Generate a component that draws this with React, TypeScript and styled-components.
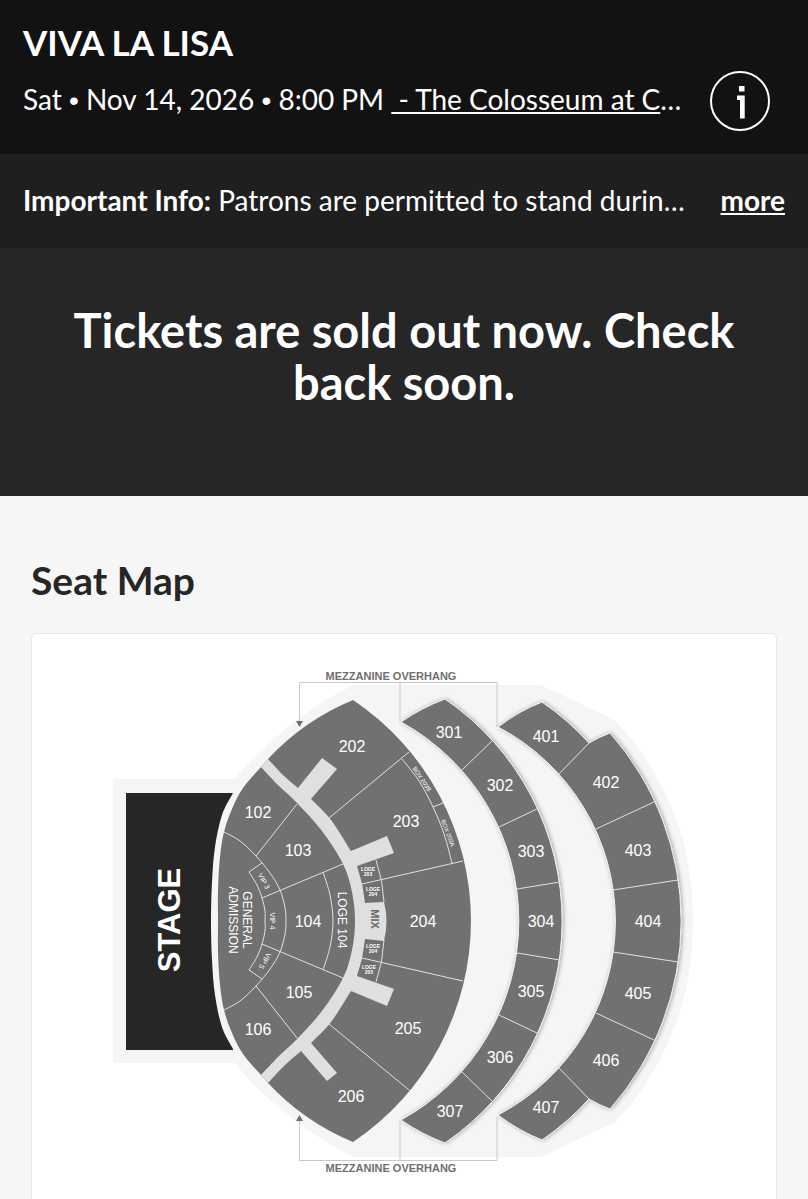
import React from "react";
import styled, { createGlobalStyle } from "styled-components";

const GlobalStyle = createGlobalStyle`
  * { box-sizing: border-box; }
  html, body { margin: 0; padding: 0; }
  body {
    background: #f6f6f6;
    color: #262626;
    font-family: Lato, "Liberation Sans", sans-serif;
    font-variant-ligatures: none;
  }
  h1, h2, p { margin: 0; }
`;

const Page = styled.div`
  display: flex;
  flex-direction: column;
  min-height: 100vh;
`;

const EventHeader = styled.header`
  background: #121212;
  color: #fff;
  padding: 22px 38px 23px 23px;
`;

const EventTitle = styled.h1`
  font-size: 35px;
  line-height: 40px;
  font-weight: 700;
`;

const EventRow = styled.div`
  display: flex;
  align-items: center;
  gap: 16px;
  margin-top: 9px;
`;

const Truncated = styled.p`
  flex: 1;
  min-width: 0;
  overflow: hidden;
  white-space: pre;
  padding-bottom: 2px;
  font-size: 28px;
  line-height: 38px;
`;

const Bullet = styled.span`
  font-family: "Liberation Sans", Arial, sans-serif;
`;

const VenueLink = styled.a`
  color: inherit;
  text-decoration: underline;
  text-decoration-thickness: 2px;
  text-underline-offset: 2px;
`;

const InfoButton = styled.button`
  flex: none;
  width: 60px;
  height: 60px;
  padding: 0;
  border: 0;
  background: none;
  color: #fff;
  cursor: pointer;
  svg { display: block; }
`;

const NoticeBar = styled.section`
  display: flex;
  align-items: baseline;
  gap: 12px;
  padding: 27px 23px;
  background: #1f1f1f;
  color: #fff;
`;

const MoreButton = styled.button`
  flex: none;
  padding: 0;
  border: 0;
  background: none;
  color: #fff;
  font: 700 28px/38px Lato, "Liberation Sans", sans-serif;
  text-decoration: underline;
  text-decoration-thickness: 2px;
  text-underline-offset: 2px;
  cursor: pointer;
`;

const SoldOut = styled.section`
  padding: 56px 60px 88px;
  background: #262626;
  color: #fff;
  text-align: center;
`;

const SoldOutTitle = styled.h2`
  font-size: 47px;
  line-height: 52px;
  font-weight: 700;
`;

const MapSection = styled.main`
  flex: 1;
  display: flex;
  flex-direction: column;
  padding: 60px 31px 0;
`;

const MapTitle = styled.h2`
  font-size: 39px;
  line-height: 48px;
  font-weight: 700;
`;

const MapCard = styled.div`
  flex: 1;
  margin-top: 29px;
  border: 1px solid #e8e8e8;
  border-bottom: 0;
  border-radius: 6px 6px 0 0;
  background: #fff;
`;

const MapDrawing = styled.svg`
  display: block;
  width: 100%;
  height: auto;
  font-family: "Liberation Sans", Arial, sans-serif;
`;

const Label = styled.text<{ $size?: number; $bold?: boolean }>`
  font-size: ${(p) => p.$size ?? 16}px;
  font-weight: ${(p) => (p.$bold ? 700 : 400)};
  text-anchor: middle;
`;

type Pt = [number, number];

/* The hall is symmetric about this horizontal axis. */
const AXIS = 921;
const flip = (pts: Pt[]): Pt[] => pts.map(([x, y]): Pt => [x, AXIS * 2 - y]).reverse();

/* Bezier segments that pass smoothly through every point. */
const through = (p: Pt[]) =>
  p
    .slice(0, -1)
    .map((b, i) => {
      const a = p[i - 1] ?? b;
      const c = p[i + 1];
      const d = p[i + 2] ?? c;
      return `C${b[0] + (c[0] - a[0]) / 6} ${b[1] + (c[1] - a[1]) / 6} ${c[0] - (d[0] - b[0]) / 6} ${
        c[1] - (d[1] - b[1]) / 6
      } ${c[0]} ${c[1]}`;
    })
    .join("");

const smooth = (p: Pt[]) => `M${p[0][0]} ${p[0][1]}${through(p)}`;
const mirrored = (top: Pt[], mid: Pt): Pt[] => [...top, mid, ...flip(top)];

const bowlLeft = mirrored([[261, 767], [243, 788], [232, 809], [224, 832], [220, 857], [218, 890]], [218, AXIS]);
const stageEdge = mirrored([[233, 793], [222, 815], [215, 847], [212, 882]], [211, AXIS]);
const walkInner = mirrored([[261, 767], [278, 785], [297, 803], [322, 831], [343, 864], [352, 892]], [355, AXIS]);
const gaArc = mirrored([[224, 832], [240, 841], [256, 856], [270, 873], [280, 890], [285, 908]], [286, AXIS]);
const vipArc = mirrored([[249, 872], [257, 885], [262, 898], [265, 911]], [265, AXIS]);
const logeArc = mirrored([[323, 872], [330, 895]], [333, AXIS]);
const boxArc: Pt[] = [[402, 759], [419, 781], [433, 807], [444, 834], [452, 863]];

const backdrop = `M113 779H235${through([[235, 779], [253, 758], [275, 738], [300, 718], [326, 700], [353, 685]])}H541L615 720${through(
  mirrored([[615, 720], [640, 750], [667, 797], [686, 853]], [693, AXIS]),
)}L541 1157H353${through([[353, 1157], [326, 1142], [300, 1124], [275, 1104], [253, 1084], [235, 1063]])}H113Z`;

const walkway = `${smooth(walkInner)}L268 1083${through([[268, 1083], [284, 1066], [301, 1051]])}L327 1081L337 1073L311 1043${through([
  [311, 1043],
  [331, 1022],
  [351, 991],
])}L387 1006L394 989L357 976${through([[357, 976], [362, 958], [365, 939]])}L384 941Q389 921 384 902L365 903${through([
  [365, 903],
  [362, 884],
  [357, 866],
])}L394 853L387 836L351 851${through([[351, 851], [331, 820], [311, 799]])}L337 769L322 758L298 788${through([
  [298, 788],
  [283, 775],
  [268, 759],
])}Z`;

const ring300 =
  "M401 722Q421 708 445 699A269 269 0 0 1 445 1143Q421 1134 401 1120A227 227 0 0 0 401 722Z";
const ring400 =
  "M498 727Q519 711 542 702A263 263 0 0 1 589 743Q599 737 610 733A284 284 0 0 1 610 1109Q599 1105 589 1099A263 263 0 0 1 542 1140Q519 1131 498 1115A219 219 0 0 0 498 727Z";

/* Each line is drawn twice, above and below the axis. */
const dividers: [number, number, number, number][] = [
  [297, 804, 256, 856],
  [343, 864, 262, 898],
  [249, 872, 262, 863],
  [329, 818, 409, 752],
  [362, 884, 463, 861],
  [462, 770, 493, 740],
  [499, 827, 537, 809],
  [517, 889, 560, 882],
  [559, 774, 589, 743],
  [596, 829, 654, 802],
  [613, 890, 678, 880],
];

const sections: [string, number, number][] = [
  ["102", 258, 812], ["103", 298, 850], ["104", 308, 921], ["105", 299, 992], ["106", 258, 1029],
  ["202", 352, 746], ["203", 406, 821], ["204", 423, 921], ["205", 408, 1028], ["206", 351, 1096],
  ["301", 449, 732], ["302", 500, 785], ["303", 531, 851], ["304", 541, 921], ["305", 531, 991],
  ["306", 500, 1057], ["307", 450, 1111],
  ["401", 546, 736], ["402", 606, 782], ["403", 638, 850], ["404", 648, 921], ["405", 638, 993],
  ["406", 606, 1060], ["407", 546, 1107],
];

/* text, centre x, centre y, angle, size */
const turned: [string, number, number, number, number][] = [
  ["GENERAL", 247, 920, 90, 12],
  ["ADMISSION", 233, 920, 90, 12],
  ["LOGE 104", 342, 920, 90, 12],
  ["VIP 3", 264, 881, 61, 7],
  ["VIP 4", 273, 921, 90, 7],
  ["VIP 5", 265, 961, 119, 7],
  ["BOX 203B", 422, 779, 56, 6],
  ["BOX 203A", 448, 833, 69, 6],
];

const loges: [string, number, number][] = [
  ["203", 368, 871],
  ["204", 373, 891],
  ["204", 373, 948],
  ["205", 369, 969],
];

function SeatMap() {
  return (
    <MapDrawing viewBox="32 634 744 565" role="img" aria-label="Seat map of The Colosseum">
      <defs>
        <filter id="lift" x="-10%" y="-5%" width="120%" height="110%">
          <feDropShadow dx="1" dy="0" stdDeviation="2" floodColor="#000" floodOpacity="0.35" />
        </filter>
      </defs>

      <path d={backdrop} fill="#f5f5f5" />
      <path d={`M126 793H233${through(stageEdge)}V1050H126Z`} fill="#262626" />
      <Label $size={31} $bold fill="#fff" transform="translate(180 920) rotate(-90)">
        STAGE
      </Label>

      <path
        d={`M261 767L268 759A243 243 0 0 1 353 700A266 266 0 0 1 353 1142A243 243 0 0 1 268 1083L261 1075${through(
          [...bowlLeft].reverse(),
        )}Z`}
        fill="#717171"
      />
      <path d={walkway} fill="#dfdfdf" />
      <g fill="#717171" stroke="#f3f3f3" filter="url(#lift)">
        <path d={ring300} />
        <path d={ring400} />
      </g>

      <g fill="none" stroke="#e2e2e2">
        {dividers.map(([x1, y1, x2, y2]) => (
          <path key={`${x1}-${y1}`} d={`M${x1} ${y1}L${x2} ${y2}M${x1} ${AXIS * 2 - y1}L${x2} ${AXIS * 2 - y2}`} />
        ))}
        <path d={smooth(gaArc)} />
        <path d={smooth(vipArc)} />
        <path d={smooth(logeArc)} />
        <path d={smooth(boxArc)} />
        <path d="M433 807L443 803" />
        <path d="M376 860Q383 880 384 902M376 982Q383 962 384 940" />
      </g>

      <g fill="#fff">
        {sections.map(([name, x, y]) => (
          <Label key={name} x={x} y={y + 6}>
            {name}
          </Label>
        ))}
        {turned.map(([name, x, y, angle, size]) => (
          <Label key={name} $size={size} transform={`translate(${x} ${y}) rotate(${angle})`} dy="0.36em">
            {name}
          </Label>
        ))}
        {loges.map(([num, x, y]) => (
          <React.Fragment key={y}>
            <Label $size={5} $bold x={x} y={y}>
              LOGE
            </Label>
            <Label $size={5} $bold x={x} y={y + 5}>
              {num}
            </Label>
          </React.Fragment>
        ))}
      </g>
      <Label $size={11} $bold fill="#6a6a6a" transform="translate(371 919) rotate(90)">
        MIX
      </Label>

      <g fill="none" stroke="#c9c9c9">
        <path d="M299.5 722V682.5H497V727M400 682V722" />
        <path d="M299.5 1120V1160.5H497V1117M400 1160V1121" />
      </g>
      <g fill="#6f6f6f">
        <path d="M296 721H303L299.500 727Z" />
        <path d="M296 1121H303L299.500 1115Z" />
        <Label $size={11} $bold x={391} y={680}>
          MEZZANINE OVERHANG
        </Label>
        <Label $size={11} $bold x={391} y={1172}>
          MEZZANINE OVERHANG
        </Label>
      </g>
    </MapDrawing>
  );
}

function InfoIcon() {
  return (
    <svg width="60" height="60" viewBox="0 0 60 60" aria-hidden="true">
      <circle cx="30" cy="30" r="29" fill="none" stroke="currentColor" strokeWidth="2" />
      <path d="M29 15H34.500V20.500H29ZM27 24.500H34.700V47.500H30V29H27Z" fill="currentColor" />
    </svg>
  );
}

export default function App() {
  return (
    <Page>
      <GlobalStyle />
      <EventHeader>
        <EventTitle>VIVA LA LISA</EventTitle>
        <EventRow>
          <Truncated>
            Sat <Bullet>•</Bullet> Nov 14, 2026 <Bullet>•</Bullet> 8:00 PM{" "}
            <VenueLink href="#venue">{" - The Colosseum at C"}</VenueLink>…
          </Truncated>
          <InfoButton type="button" aria-label="Event information">
            <InfoIcon />
          </InfoButton>
        </EventRow>
      </EventHeader>
      <NoticeBar>
        <Truncated>
          <strong>Important Info:</strong> Patrons are permitted to stand durin…
        </Truncated>
        <MoreButton type="button">more</MoreButton>
      </NoticeBar>
      <SoldOut>
        <SoldOutTitle>Tickets are sold out now. Check back soon.</SoldOutTitle>
      </SoldOut>
      <MapSection>
        <MapTitle>Seat Map</MapTitle>
        <MapCard>
          <SeatMap />
        </MapCard>
      </MapSection>
    </Page>
  );
}
